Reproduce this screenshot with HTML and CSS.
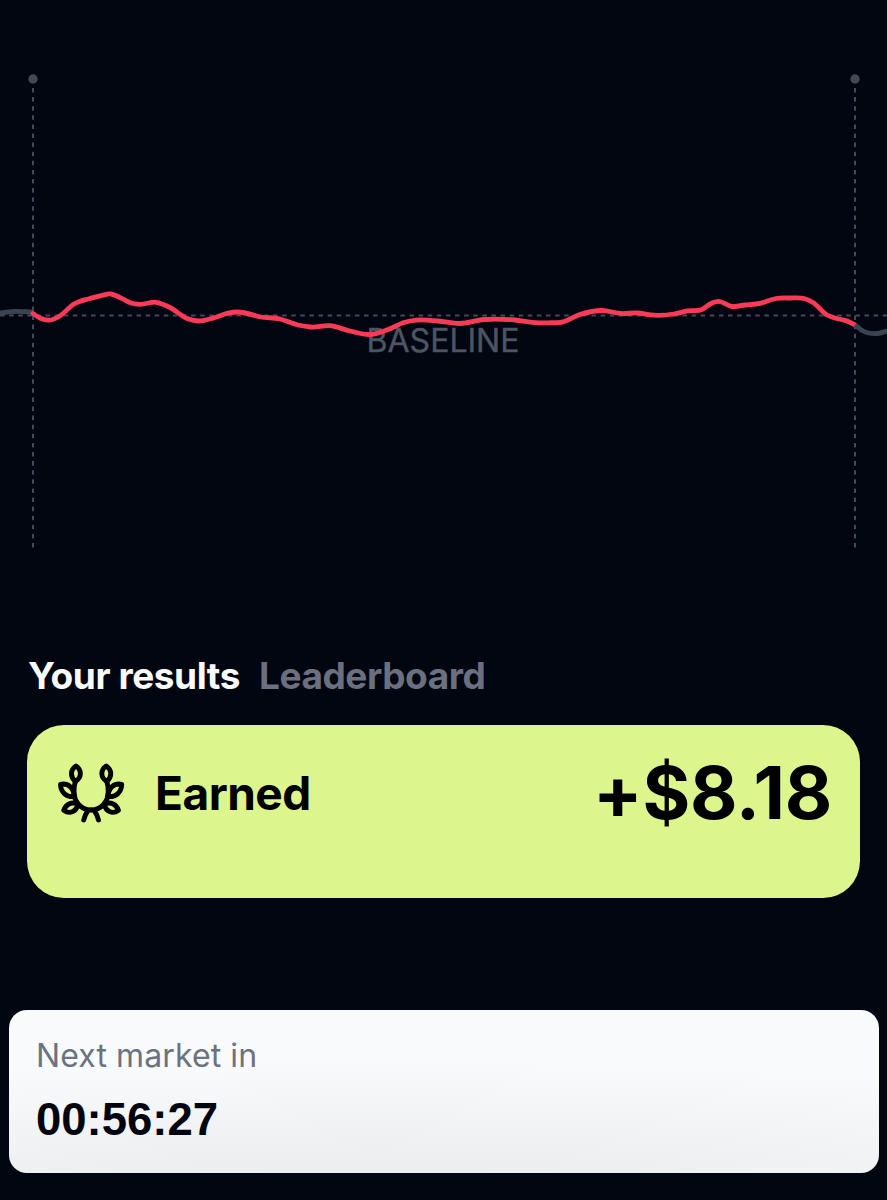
FILE: index.html
```
<!DOCTYPE html>
<html lang="en">
<head>
    <meta charset="UTF-8">
    <meta name="viewport" content="width=device-width, initial-scale=1.0">
    <title>Your results</title>
    <link rel="stylesheet" href="styles.css">
</head>
<body>
    <div class="screen">
        <svg class="chart" viewBox="0 0 887 600">
            <line class="guide" x1="0" y1="315.5" x2="887" y2="315.5"/>
            <line class="guide" x1="33" y1="88" x2="33" y2="548"/>
            <line class="guide" x1="855" y1="88" x2="855" y2="548"/>
            <circle class="guide-dot" cx="33" cy="79" r="4.7"/>
            <circle class="guide-dot" cx="855" cy="79" r="4.7"/>
            <text class="baseline-label" x="443" y="352">BASELINE</text>
            <path class="line line-before"/>
            <path class="line line-round"/>
            <path class="line line-after"/>
        </svg>

        <div class="results">
            <div class="tabs">
                <div class="tab active">Your results</div>
                <div class="tab">Leaderboard</div>
            </div>
            <div class="earned">
                <svg class="laurel" viewBox="0 0 95 85">
                    <g id="branch">
                        <path d="M46.1 60C35.5 60 29 51 29 42C29 37 29.4 34.5 30.3 31.5"/>
                        <path d="M30.5 31.5C25 27 25 20 31 16C37 20 36.8 27.5 30.5 31.5Z"/>
                        <path d="M29.5 46.5C21.5 47.5 15.7 42.5 15.5 34.3C23.5 33 28.5 37.5 29.5 46.5Z"/>
                        <path d="M33 54.5C27 51 21 54 18.7 60.3C24.5 64.5 31 62 33 54.5Z"/>
                        <path d="M43 60.5C40.8 63.5 39.6 66.5 38.7 70"/>
                    </g>
                    <use href="#branch" transform="matrix(-1 0 0 1 92.2 0)"/>
                </svg>
                <div class="earned-title">Earned</div>
                <div class="earned-amount">+$8.18</div>
            </div>
        </div>

        <div class="next-market">
            <div class="next-label">Next market in</div>
            <div class="countdown">00:56:27</div>
        </div>
    </div>

    <script>
        const before = [[-12, 315], [0, 313], [15, 311.5], [33, 312]];
        const round = [
            [33, 313.5], [40, 318], [49, 320.2], [59, 316.5], [74, 304], [90, 298.5], [102, 295.3],
            [111, 294], [121, 298], [131, 303], [140, 304.3], [156, 302.3], [170, 307.5],
            [187, 318.5], [198, 321], [215, 317.5], [228, 313.2], [238, 312], [261, 317],
            [280, 319], [298, 325], [311, 327], [330, 325.7], [350, 331], [371, 334.5],
            [388, 329.5], [405, 322.3], [416, 320.2], [438, 321], [460, 323.5], [484, 319.5],
            [515, 320], [532, 322.3], [548, 322.8], [563, 321.8], [580, 314.5], [602, 310.5],
            [621, 313.5], [637, 313], [654, 315.2], [674, 314], [688, 310.8], [702, 309.5],
            [711, 303.5], [718, 301.3], [732, 306.5], [745, 305], [760, 303.3], [776, 298.5],
            [790, 298], [804, 298.5], [813, 302.5], [827, 315], [837, 318.5], [847, 321], [855, 325]
        ];
        const after = [[855, 325], [863, 331], [875, 333.7], [887, 331], [900, 326]];

        function slope(p, q) {
            return (q[1] - p[1]) / (q[0] - p[0]);
        }

        // Tangent at a point, the nearer neighbour counts more
        function tangent(prev, p, next) {
            if (!prev) return slope(p, next);
            if (!next) return slope(prev, p);
            const h1 = p[0] - prev[0];
            const h2 = next[0] - p[0];
            return (slope(prev, p) * h2 + slope(p, next) * h1) / (h1 + h2);
        }

        function buildPath(points) {
            let d = `M${points[0]}`;
            for (let i = 0; i < points.length - 1; i++) {
                const a = points[i];
                const b = points[i + 1];
                const dx = (b[0] - a[0]) / 3;
                const ta = tangent(points[i - 1], a, b);
                const tb = tangent(a, b, points[i + 2]);
                d += `C${a[0] + dx} ${a[1] + dx * ta} ${b[0] - dx} ${b[1] - dx * tb} ${b[0]} ${b[1]}`;
            }
            return d;
        }

        document.querySelector('.line-before').setAttribute('d', buildPath(before));
        document.querySelector('.line-round').setAttribute('d', buildPath(round));
        document.querySelector('.line-after').setAttribute('d', buildPath(after));
    </script>
</body>
</html>
```
FILE: styles.css
```
* {
    box-sizing: border-box;
}

body {
    margin: 0;
    background-color: #020611;
    font-family: Inter, sans-serif;
}

.screen {
    height: 1200px;
    display: flex;
    flex-direction: column;
    overflow: hidden;
}

.chart {
    display: block;
    width: 100%;
    height: 600px;
    flex: none;
}

.guide {
    stroke: #424957;
    stroke-width: 2;
    stroke-dasharray: 4.55 4.55;
}

.guide-dot {
    fill: #414856;
}

.baseline-label {
    fill: #4b5563;
    stroke: #4b5563;
    stroke-width: 0.4;
    font-size: 32px;
    text-anchor: middle;
}

.line {
    fill: none;
    stroke-width: 4.8;
    stroke: #3a4352;
}

.line-round {
    stroke: #fb3a57;
    stroke-linecap: round;
}

.results {
    padding: 52px 27px 0;
}

.tabs {
    display: flex;
    gap: 19px;
    padding-left: 1px;
    height: 73px;
    font-size: 37px;
    line-height: 48px;
    font-weight: 700;
    letter-spacing: -0.43px;
    color: #6b7080;
}

.tab.active {
    color: #f9fafb;
}

.earned {
    display: flex;
    align-items: flex-start;
    height: 173px;
    padding: 25px 28px 0 18px;
    border-radius: 37px;
    background-color: #dcf58c;
    color: #000;
}

.laurel {
    width: 95px;
    height: 85px;
    fill: none;
    stroke: #000;
    stroke-width: 4.9;
    stroke-linecap: round;
    stroke-linejoin: round;
}

.earned-title {
    margin-left: 15px;
    font-size: 46px;
    line-height: 86px;
    font-weight: 700;
    letter-spacing: -0.5px;
}

.earned-amount {
    margin-left: auto;
    font-size: 73px;
    line-height: 85px;
    font-weight: 700;
    letter-spacing: -0.2px;
}

.next-market {
    margin: 112px 8px 0 9px;
    height: 163px;
    padding: 25px 28px;
    border-radius: 18px;
    background: radial-gradient(ellipse 120% 80% at 42% 112%, #e9eaec 0%, #f9fafc 100%);
}

.next-label {
    margin-left: -1px;
    font-size: 32px;
    line-height: 42px;
    letter-spacing: 0.1px;
    color: #6b7280;
}

.countdown {
    margin: 16px 0 0 -1px;
    font-family: "Liberation Sans", Arial, sans-serif;
    font-size: 45.5px;
    line-height: 54px;
    font-weight: 700;
    color: #02050f;
}
```
